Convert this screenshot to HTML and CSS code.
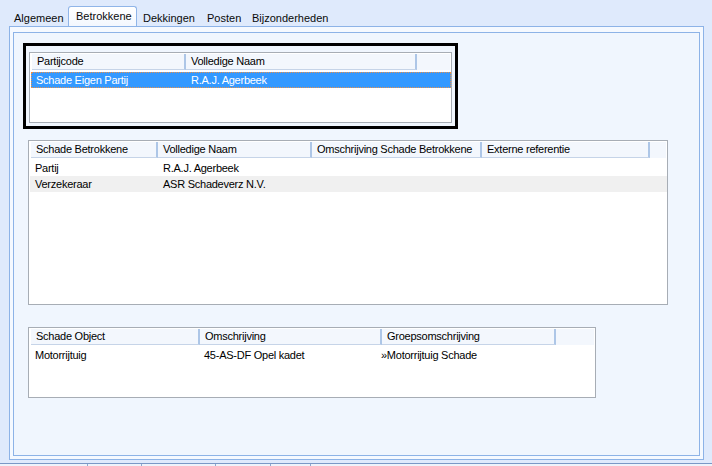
FILE: index.html
```html
<!DOCTYPE html>
<html>
<head>
<meta charset="utf-8">
<link rel="stylesheet" href="styles.css">
</head>
<body>
<div class="tabs">
  <span class="tab t-alg">Algemeen</span>
  <span class="tab tab-sel t-bet">Betrokkene</span>
  <span class="tab t-dek">Dekkingen</span>
  <span class="tab t-pos">Posten</span>
  <span class="tab t-bij">Bijzonderheden</span>
</div>
<div class="panel">
  <div class="panel-inner">
    <div class="focusbox">
      <div class="list l1">
        <div class="hdr">
          <div class="hc h1-1">Partijcode</div>
          <div class="hc h1-2">Volledige Naam</div>
          <div class="hfill"></div>
        </div>
        <div class="row row-sel r1">
          <div class="rc">Schade Eigen Partij</div>
          <div class="rc">R.A.J. Agerbeek</div>
        </div>
      </div>
    </div>
    <div class="list l2">
      <div class="hdr">
        <div class="hc h2-1">Schade Betrokkene</div>
        <div class="hc h2-2">Volledige Naam</div>
        <div class="hc h2-3">Omschrijving Schade Betrokkene</div>
        <div class="hc h2-4">Externe referentie</div>
        <div class="hfill"></div>
      </div>
      <div class="row r2">
        <div class="rc">Partij</div>
        <div class="rc">R.A.J. Agerbeek</div>
        <div class="rc"></div>
        <div class="rc"></div>
      </div>
      <div class="row row-alt r2">
        <div class="rc">Verzekeraar</div>
        <div class="rc">ASR Schadeverz N.V.</div>
        <div class="rc"></div>
        <div class="rc"></div>
      </div>
    </div>
    <div class="list l3">
      <div class="hdr">
        <div class="hc h3-1">Schade Object</div>
        <div class="hc h3-2">Omschrijving</div>
        <div class="hc h3-3">Groepsomschrijving</div>
        <div class="hfill"></div>
      </div>
      <div class="row r3">
        <div class="rc">Motorrijtuig</div>
        <div class="rc">45-AS-DF Opel kadet</div>
        <div class="rc">»Motorrijtuig Schade</div>
      </div>
    </div>
  </div>
</div>
<div class="status">
  <div class="sc s1"></div>
  <div class="sc s2"></div>
  <div class="sc s3"></div>
  <div class="sc s4"></div>
  <div class="sc s5"></div>
  <div class="sc s6"></div>
</div>
</body>
</html>
```
FILE: styles.css
```css
* { box-sizing: border-box; }

body {
  margin: 0;
  width: 712px;
  height: 466px;
  overflow: hidden;
  background: #dfeafc;
  font-family: "Liberation Sans", Arial, sans-serif;
  font-size: 11px;
  color: #000;
  display: flex;
  flex-direction: column;
}

/* tabs */
.tabs {
  height: 26px;
  flex: none;
  display: flex;
  align-items: flex-end;
  padding-left: 14px;
}
.tab {
  height: 16px;
  line-height: 16px;
  white-space: nowrap;
  color: #0a0a0a;
}
.t-alg { width: 54px; }
.t-bet { width: 69px; }
.t-dek { width: 70px; padding-left: 6px; }
.t-pos { width: 45px; }
.t-bij { width: 90px; }
.tab-sel {
  height: 20px;
  padding: 1px 0 2px 7px;
  border: 1px solid #90b5e8;
  border-bottom: none;
  border-radius: 3px 3px 0 0;
  background: linear-gradient(#ffffff, #f3f7fe);
}

/* panel */
.panel {
  flex: none;
  height: 434px;
  margin: 0 8px 0 9px;
  border: 1px solid #8db3e7;
  background: #f5f9ff;
  padding: 5px 3px 3px 3px;
  display: flex;
}
.panel-inner {
  flex: 1;
  border: 1px solid #8db3e7;
  background: #f0f6fe;
}

.focusbox {
  margin: 10px 0 0 9px;
  width: 435px;
  height: 86px;
  border: 3px solid #000;
  padding: 6px 3px 3px 3px;
}

/* list views */
.list {
  border: 1px solid #a7adb5;
  background: #fff;
  letter-spacing: -0.25px;
}
.l1 { width: 423px; height: 71px; }
.l2 { margin: 11px 0 0 14px; width: 640px; height: 165px; }
.l3 { margin: 22px 0 0 14px; width: 568px; height: 71px; }

.hdr {
  display: flex;
  height: 16px;
  margin: 1px 1px 2px 2px;
  background: #f3f7fd;
}
.hc {
  height: 16px;
  line-height: 15px;
  padding-left: 5px;
  white-space: nowrap;
  overflow: hidden;
  border-right: 2px solid #adc6e7;
  border-bottom: 1px solid #c6d4e8;
}
.hfill { flex: 1; }

.h1-1 { width: 154px; }
.h1-2 { width: 231px; }
.h2-1 { width: 127px; }
.h2-2 { width: 154px; }
.h2-3 { width: 170px; }
.h2-4 { width: 168px; }
.h3-1 { width: 169px; }
.h3-2 { width: 182px; }
.h3-3 { width: 174px; }

.row {
  display: grid;
  height: 16px;
  line-height: 16px;
  margin-left: 1px;
  white-space: nowrap;
}
.rc { padding-left: 5px; overflow: hidden; }
.r1 { grid-template-columns: 155px 1fr; }
.r2 { grid-template-columns: 128px 154px 170px 1fr; }
.r3 { grid-template-columns: 169px 177px 1fr; }

.row-sel {
  background: #3399ff;
  color: #fff;
  border: 1px dotted #e8914a;
  line-height: 14px;
}
.row-sel .rc { padding-left: 4px; }
.row-alt { background: #f0f0f0; }

/* status bar */
.status {
  flex: 1;
  margin-top: 3px;
  border-top: 1px solid #7a98c6;
  display: flex;
  background: #eef3fb;
}
.sc { border-right: 1px solid #8ea8d0; }
.s1 { width: 88px; }
.s2 { width: 54px; }
.s3 { width: 74px; }
.s4 { width: 55px; }
.s5 { width: 40px; }
.s6 { flex: 1; border-right: none; }
```
